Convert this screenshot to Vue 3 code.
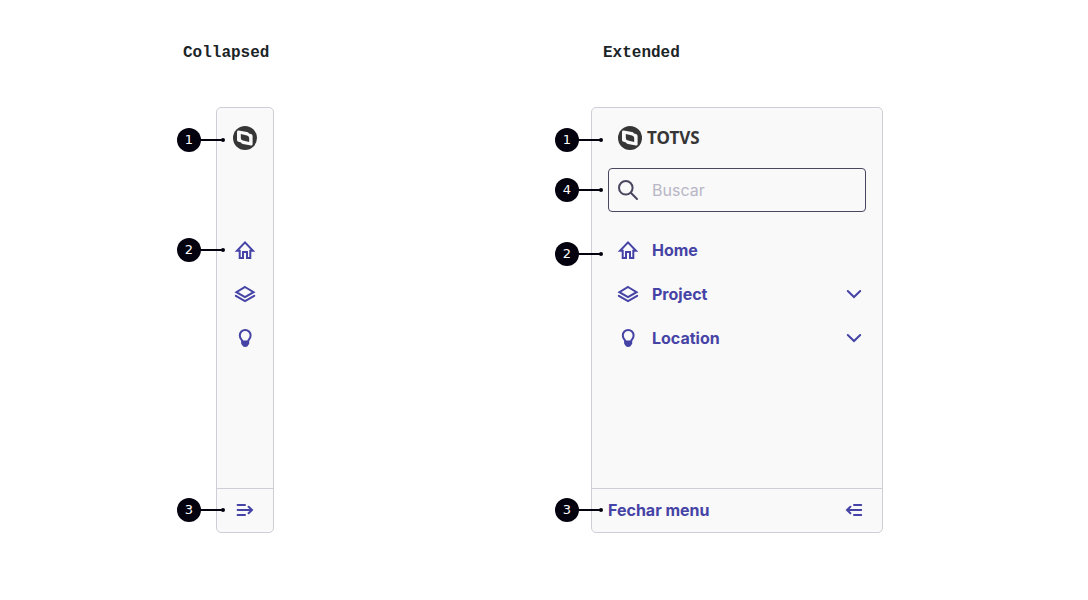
<script setup>
import { h } from 'vue'

const shapes = {
  home: [['path', { d: 'M12 4.4L4 12.8H6.7V20H10V14H14V20H17.3V12.8H20Z' }]],
  layers: [
    ['path', { d: 'M12 5L20.6 10.2L12 15.2L3.4 10.2Z' }],
    ['path', { d: 'M2.8 13.8L12 19L21.2 13.8' }],
  ],
  bulb: [
    ['path', { d: 'M9.4 15.4C9.4 13.8 6.8 12.8 6.8 9.4A5.4 5.4 0 0 1 17.6 9.4C17.6 12.8 15 13.8 15 15.4Z' }],
    ['path', { class: 'solid', d: 'M8.2 15H16.2V18L15.2 19C15 20.3 13.8 20.9 12.2 20.9S9.4 20.3 9.2 19L8.2 18Z' }],
  ],
  search: [
    ['circle', { cx: 9.8, cy: 9.8, r: 6.8 }],
    ['path', { d: 'M14.8 14.8L21 21' }],
  ],
  chevron: [['path', { d: 'M5.8 9L12 15L18.2 9' }]],
  open: [['path', { d: 'M4.6 7H12M4.6 12H19M4.6 17H12M15.6 8.8L19 12L15.6 15.2' }]],
  close: [['path', { d: 'M19.2 7H12M19.2 12H5M19.2 17H12M8.4 8.8L5 12L8.4 15.2' }]],
}

const Icon = ({ name }) =>
  h('svg', { viewBox: '0 0 24 24', width: 24, height: 24, 'aria-hidden': 'true' },
    shapes[name].map(([tag, attrs]) => h(tag, attrs)))
Icon.props = ['name']

const BrandMark = () =>
  h('svg', { viewBox: '0 0 24 24', width: 24, height: 24, 'aria-hidden': 'true' }, [
    h('circle', { class: 'disc', cx: 12, cy: 12, r: 12 }),
    h('path', { class: 'cut', d: 'M4 6Q4 4.4 5.6 4.6L14 6Q15.6 6.3 16 7.6L18 8Q19.6 8.4 19.6 10V18.2Q19.6 19.8 18 19.6L10 18Q8.4 17.7 8 16.4L5.6 15.8Q4 15.4 4 14Z' }),
    h('path', { class: 'disc', d: 'M7.8 8L14 9.4Q16.2 9.9 16.2 12V16L10 14.6Q7.8 14.1 7.8 12Z' }),
  ])

const items = [
  { label: 'Home', icon: 'home' },
  { label: 'Project', icon: 'layers', nested: true },
  { label: 'Location', icon: 'bulb', nested: true },
]
const collapsedNotes = [
  { n: 1, at: 'at-logo' },
  { n: 2, at: 'at-nav' },
  { n: 3, at: 'at-footer' },
]
const extendedNotes = [
  { n: 1, at: 'at-logo' },
  { n: 4, at: 'at-search' },
  { n: 2, at: 'at-nav' },
  { n: 3, at: 'at-footer' },
]
</script>

<template>
  <main class="page">
    <section class="variant collapsed">
      <h2>Collapsed</h2>
      <div class="panel">
        <header class="brand"><BrandMark /></header>
        <nav aria-label="Collapsed menu">
          <a v-for="item in items" :key="item.label" class="item" href="#" :aria-label="item.label">
            <Icon :name="item.icon" />
          </a>
        </nav>
        <button class="toggle" type="button" aria-label="Abrir menu"><Icon name="open" /></button>
        <span v-for="note in collapsedNotes" :key="note.n" class="note" :class="note.at">
          <b>{{ note.n }}</b>
        </span>
      </div>
    </section>

    <section class="variant extended">
      <h2>Extended</h2>
      <div class="panel">
        <header class="brand"><BrandMark /><span class="wordmark">TOTVS</span></header>
        <label class="search">
          <Icon name="search" />
          <input type="search" placeholder="Buscar" aria-label="Buscar" />
        </label>
        <nav aria-label="Extended menu">
          <a v-for="item in items" :key="item.label" class="item" href="#">
            <Icon :name="item.icon" />
            <span class="label">{{ item.label }}</span>
            <Icon v-if="item.nested" name="chevron" />
          </a>
        </nav>
        <button class="toggle" type="button">
          <span class="label">Fechar menu</span>
          <Icon name="close" />
        </button>
        <span v-for="note in extendedNotes" :key="note.n" class="note" :class="note.at">
          <b>{{ note.n }}</b>
        </span>
      </div>
    </section>
  </main>
</template>

<style>
body {
  margin: 0;
  background: #fff;
}
</style>

<style scoped>
.page {
  display: grid;
  grid-template-columns: 1fr 1fr;
  padding: 41px 0 40px;
  font-family: Inter, "Liberation Sans", sans-serif;
  font-size: 16px;
  line-height: 24px;
  color: #4543a5;
}
.collapsed {
  padding-left: 177px;
}
.extended {
  padding-left: 11px;
}
h2 {
  margin: 0 0 42px;
  font: 700 16px/24px "Liberation Mono", monospace;
  color: #1b2426;
}
.collapsed h2 {
  padding-left: 6px;
}
.extended h2 {
  padding-left: 48px;
}
.panel {
  position: relative;
  box-sizing: border-box;
  display: flex;
  flex-direction: column;
  min-height: 426px;
  padding-top: 8px;
  border: 1px solid #cfced6;
  border-radius: 5px;
  background: #f9f9f9;
}
.collapsed .panel {
  width: fit-content;
  margin-left: 39px;
}
.extended .panel {
  max-width: 292px;
  margin-left: 36px;
}
.brand {
  display: flex;
  align-items: center;
  gap: 5px;
  height: 44px;
  padding: 0 16px;
  color: #363636;
}
.extended .brand {
  padding: 0 26px;
}
.wordmark {
  font: 700 17px/24px "Noto Sans", "Open Sans", sans-serif;
}
.panel :deep(svg) {
  display: block;
  flex: none;
  fill: none;
  stroke: currentColor;
  stroke-width: 2;
  stroke-linecap: round;
}
.panel :deep(.solid) {
  fill: currentColor;
  stroke: none;
}
.panel :deep(.disc) {
  fill: #363636;
  stroke: none;
}
.panel :deep(.cut) {
  fill: #f9f9f9;
  stroke: none;
}
.search {
  box-sizing: border-box;
  display: flex;
  align-items: center;
  gap: 12px;
  height: 44px;
  margin: 8px 16px 0;
  padding: 0 7px;
  border: 1px solid #4a465f;
  border-radius: 4px;
  color: #4a465f;
}
.search input {
  flex: 1;
  min-width: 0;
  padding: 0;
  border: 0;
  outline: 0;
  background: transparent;
  font: inherit;
  color: inherit;
}
.search input::placeholder {
  color: #b8b6c5;
  opacity: 1;
}
nav {
  flex: 1;
  margin-top: 68px;
}
.extended nav {
  margin-top: 16px;
}
.item {
  display: flex;
  align-items: center;
  gap: 12px;
  height: 44px;
  padding: 0 16px;
  color: inherit;
  text-decoration: none;
}
.extended .item {
  padding-left: 24px;
}
.label {
  flex: 1;
  font-weight: 700;
}
.toggle {
  box-sizing: border-box;
  display: flex;
  align-items: center;
  height: 44px;
  padding: 0 16px 1px;
  border: 0;
  border-top: 1px solid #cfced6;
  background: transparent;
  font: inherit;
  text-align: left;
  color: inherit;
}
.note {
  position: absolute;
  display: flex;
  width: 48px;
  height: 24px;
}
.collapsed .note {
  left: -40px;
}
.extended .note {
  left: -37px;
}
.note b {
  width: 24px;
  height: 24px;
  border-radius: 50%;
  background: #04020f;
  color: #fff;
  font: 400 13px/24px "DejaVu Sans", sans-serif;
  text-align: center;
}
.note::before {
  content: "";
  position: absolute;
  top: 11px;
  left: 22px;
  width: 25px;
  height: 2px;
  background: #04020f;
}
.note::after {
  content: "";
  position: absolute;
  top: 10px;
  right: 0;
  width: 4px;
  height: 4px;
  border-radius: 50%;
  background: #04020f;
}
.at-logo {
  top: 20px;
}
.at-search {
  top: 70px;
}
.at-nav {
  top: 130px;
}
.extended .at-nav {
  top: 134px;
}
.at-footer {
  top: 390px;
}
</style>
